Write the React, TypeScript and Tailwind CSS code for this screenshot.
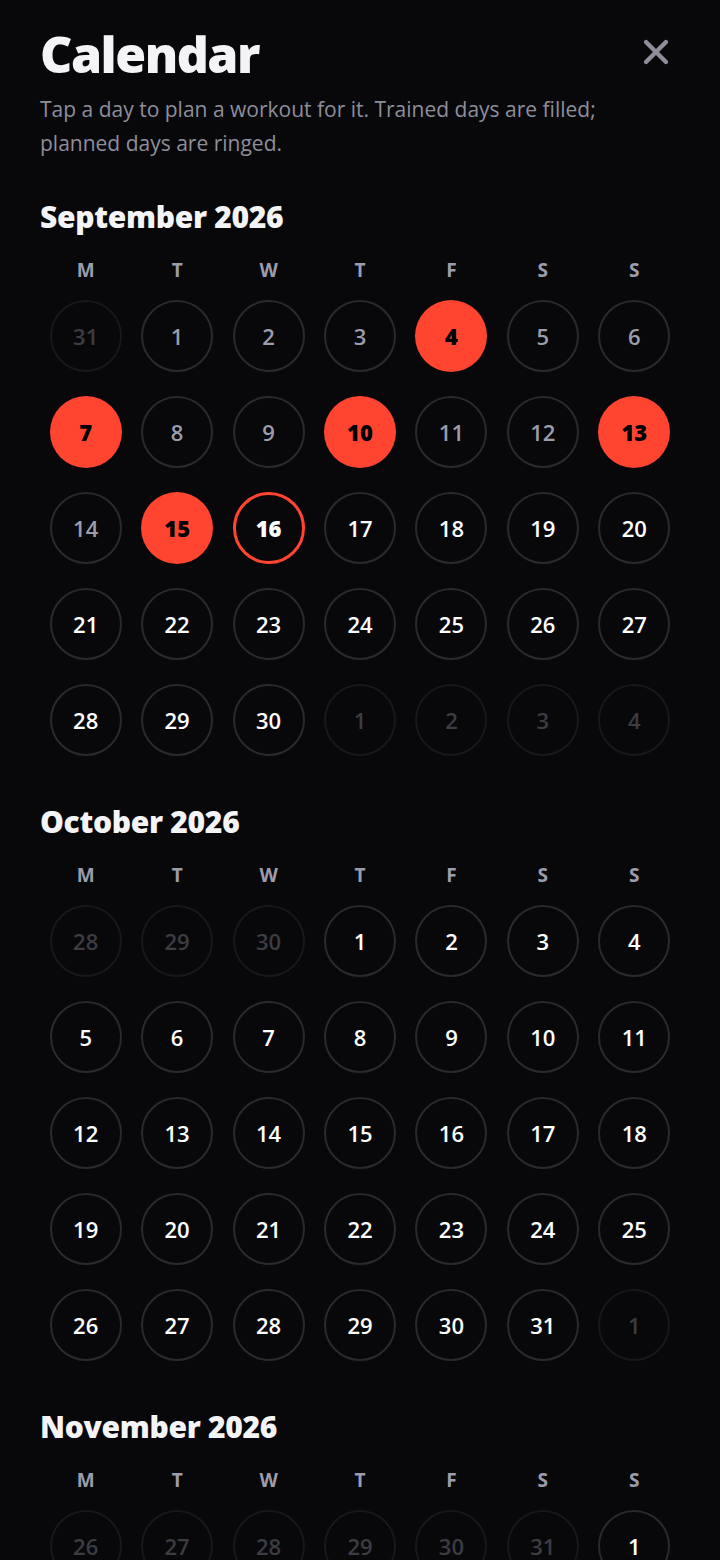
import { X } from "lucide-react";

const WEEKDAYS = ["M", "T", "W", "T", "F", "S", "S"];
const TRAINED = ["2026-9-4", "2026-9-7", "2026-9-10", "2026-9-13", "2026-9-15"];
const TODAY = new Date(2026, 8, 16);

type Cell = { date: Date; inMonth: boolean };

function buildMonth(year: number, month: number): Cell[] {
  const first = new Date(year, month, 1);
  const offset = (first.getDay() + 6) % 7;
  const last = new Date(year, month + 1, 0).getDate();
  const total = Math.ceil((offset + last) / 7) * 7;
  const cells: Cell[] = [];
  for (let i = 0; i < total; i++) {
    const d = new Date(year, month, 1 - offset + i);
    cells.push({ date: d, inMonth: d.getMonth() === month });
  }
  return cells;
}

const key = (d: Date) => `${d.getFullYear()}-${d.getMonth() + 1}-${d.getDate()}`;

const DayCell = ({ cell }: { cell: Cell }) => {
  const { date, inMonth } = cell;
  const trained = inMonth && TRAINED.includes(key(date));
  const isToday = inMonth && key(date) === key(TODAY);
  const past = date < TODAY;

  let cls = "border-2 border-[#2a2a2e] text-white font-semibold";
  if (!inMonth) cls = "border-2 border-[#18181b] text-[#3c3c42] font-semibold";
  else if (trained) cls = "bg-[#ff4530] text-black font-extrabold";
  else if (isToday) cls = "border-[3px] border-[#ff4530] text-white font-extrabold";
  else if (past) cls = "border-2 border-[#2a2a2e] text-[#9c9cab] font-semibold";

  return (
    <div className="flex justify-center">
      <button
        className={`flex h-[72px] w-[72px] items-center justify-center rounded-full text-[22px] ${cls}`}
      >
        {date.getDate()}
      </button>
    </div>
  );
};

const Month = ({ year, month, name, first }: { year: number; month: number; name: string; first?: boolean }) => {
  const cells = buildMonth(year, month);
  return (
    <section className={first ? "mt-[40px]" : "mt-[49px]"}>
      <h2 className="text-[30px] font-extrabold leading-[34px] tracking-[-0.3px] text-[#f4f4f7]">
        {name} {year}
      </h2>
      <div className="mt-[24px] grid grid-cols-7">
        {WEEKDAYS.map((w, i) => (
          <div key={i} className="text-center text-[19px] font-bold leading-[24px] text-[#9c9cab]">
            {w}
          </div>
        ))}
      </div>
      <div className="mt-[18px] grid grid-cols-7 gap-y-6">
        {cells.map((c, i) => (
          <DayCell key={i} cell={c} />
        ))}
      </div>
    </section>
  );
};

export default function App() {
  return (
    <div className="min-h-[1560px] bg-[#08080b] px-10 pt-[26px] font-['Open_Sans',sans-serif]">
      <div className="flex items-start justify-between">
        <h1 className="text-[50px] font-extrabold leading-[56px] tracking-[-1.5px] text-[#f4f4f7]">
          Calendar
        </h1>
        <button className="mr-1 mt-[6px] text-[#8e8e9a]">
          <X size={40} strokeWidth={2.6} />
        </button>
      </div>
      <p className="mt-[10px] text-[21px] leading-[34px] text-[#8e8e9a]">
        Tap a day to plan a workout for it. Trained days are filled; planned days are ringed.
      </p>
      <Month year={2026} month={8} name="September" first />
      <Month year={2026} month={9} name="October" />
      <Month year={2026} month={10} name="November" />
    </div>
  );
}
